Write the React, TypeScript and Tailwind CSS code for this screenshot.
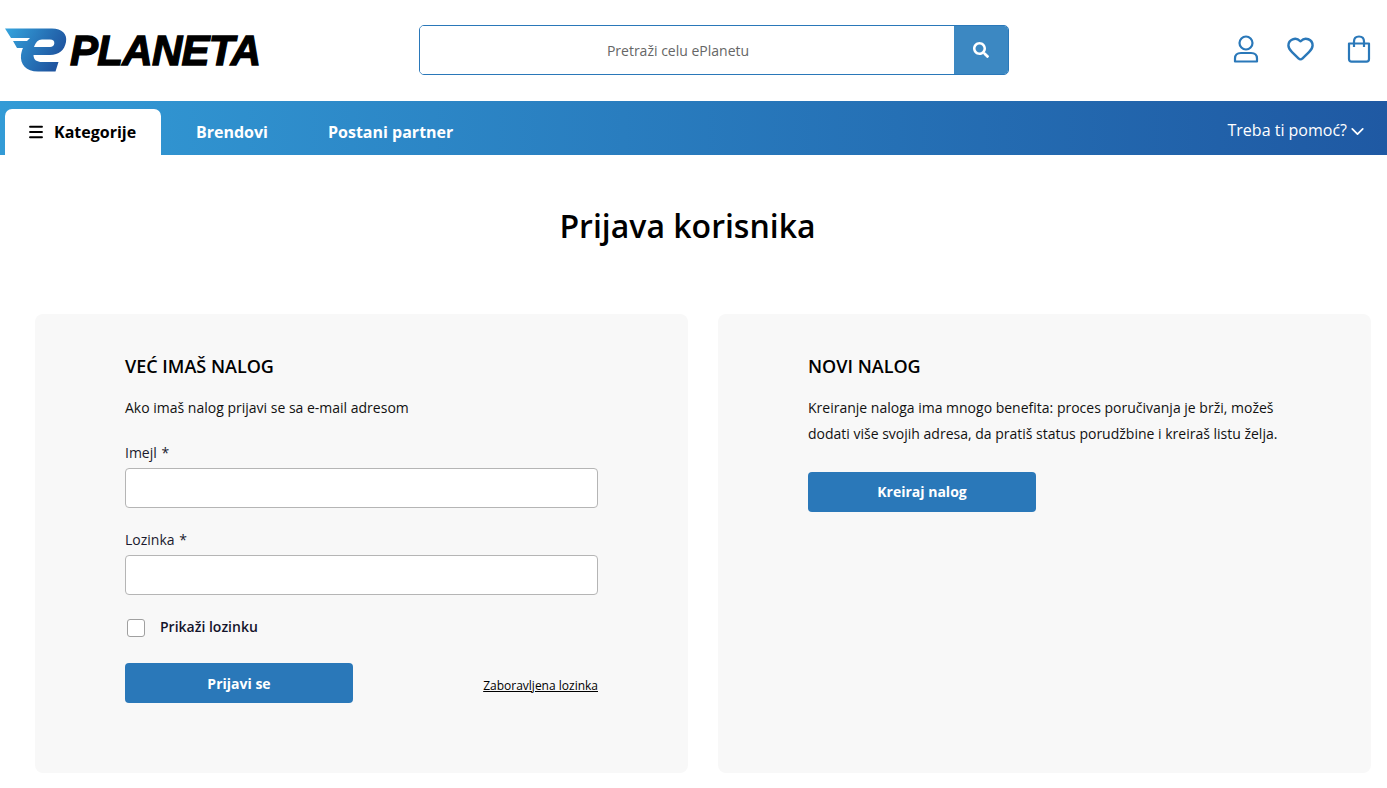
import React from 'react';
import { ChevronDown, Heart, Menu } from 'lucide-react';
import { FaSearch } from 'react-icons/fa';

const Logo = () => (
  <div className="flex items-center w-[419px] h-[50px] shrink-0">
    <svg width="70" height="50" viewBox="0 25 70 50" className="shrink-0">
      <defs>
        <linearGradient id="logoBlue" x1="0" y1="0" x2="1" y2="0.4">
          <stop offset="0" stopColor="#35a5de" />
          <stop offset="1" stopColor="#1f55a0" />
        </linearGradient>
      </defs>
      <path
        d="M5 28.500H52C62 28.500 67.500 34 66 42C64.500 50 59 55 50 55H33.500C33.500 60 37 62 42 62H58.500L55.500 71.500H38C26 71.500 20 64 21 55C21.500 52 22 50 23 48H17L13 41H27C28 40 29 39 30 38H11Z"
        fill="url(#logoBlue)"
      />
      <path d="M34 47H50C52.500 47 54 45.500 54.300 43.500C54.600 41 53 39.500 50 39.500H42C38 39.500 35.500 42.500 34 47Z" fill="#fff" />
    </svg>
    <span className="mt-[2px] font-['Liberation_Sans',sans-serif] text-[42px] leading-none font-bold italic text-black tracking-[-0.7px] [-webkit-text-stroke:1.3px_#000]">
      PLANETA
    </span>
  </div>
);

const SearchBar = () => (
  <div className="flex w-[590px] h-[50px] rounded-[5px] border border-[#2a78b9] overflow-hidden">
    <div className="flex-1 flex items-center justify-center pr-[18px] pt-[2px] text-sm text-[#666] bg-white">Pretraži celu ePlanetu</div>
    <div className="w-[54px] bg-[#3c88c2] flex items-center justify-center">
      <FaSearch size={16} className="text-white" />
    </div>
  </div>
);

const HeaderIcons = () => (
  <div className="ml-auto mb-[2px] flex items-center text-[#2a78b9] pr-[16px]">
    <svg width="26" height="28" viewBox="0 0 26 28" fill="none" stroke="currentColor" strokeWidth="2.200" className="-mr-[1px] -translate-x-[1px]">
      <circle cx="13" cy="8" r="6.500" />
      <path d="M2 26.500V23.500C2 20 4.500 18 8 18H18C21.500 18 24 20 24 23.500V26.500Z" strokeLinejoin="round" />
    </svg>
    <Heart size={29} strokeWidth={2} className="ml-[27px]" />
    <svg width="24" height="28" viewBox="0 0 24 28" fill="none" stroke="currentColor" strokeWidth="2.200" className="ml-[32px]">
      <path d="M2 8.500H22V24C22 25.700 21 26.700 19.500 26.700H4.500C3 26.700 2 25.700 2 24Z" strokeLinejoin="round" />
      <path d="M7 12V6.500C7 3.500 9 1.500 12 1.500C15 1.500 17 3.500 17 6.500V12" />
    </svg>
  </div>
);

const Field = ({ label }: { label: string }) => (
  <div>
    <label className="block text-sm leading-[19px] text-[#1a1a2e]">
      {label} <span className="ml-[1px]">*</span>
    </label>
    <div className="mt-[6px] h-10 rounded-[4px] border border-[#b5b5b5] bg-white" />
  </div>
);

export default function App() {
  return (
    <div className="min-h-[788px] bg-white font-['Open_Sans',sans-serif] text-black overflow-hidden">
      {/* Header */}
      <header className="h-[101px] flex items-center pb-[2px]">
        <Logo />
        <SearchBar />
        <HeaderIcons />
      </header>

      {/* Nav */}
      <nav className="h-[54px] flex items-end pl-[5px] pr-[19px] bg-gradient-to-r from-[#339bd6] to-[#1f59a3]">
        <div className="w-[156px] h-[46px] pl-[22px] bg-white rounded-t-[7px] flex items-center gap-[9px] text-base font-bold text-black">
          <Menu size={18} strokeWidth={2.500} />
          Kategorije
        </div>
        <div className="h-[46px] ml-[35px] flex items-center text-base font-bold text-white">Brendovi</div>
        <div className="h-[46px] ml-[60px] flex items-center text-base font-bold text-white">Postani partner</div>
        <div className="ml-auto self-center pt-[4px] flex items-center text-base text-white">
          Treba ti pomoć?
          <ChevronDown size={21} strokeWidth={2} className="mt-[3px]" />
        </div>
      </nav>

      {/* Title */}
      <h1 className="mt-[47px] pr-[12px] text-center text-[32px] leading-[48px] font-semibold text-black">Prijava korisnika</h1>

      {/* Cards */}
      <main className="mt-[64px] pr-[16px] pl-[35px] grid grid-cols-2 gap-[30px]">
        <section className="h-[459px] rounded-[8px] bg-[#f8f8f8] px-[90px] pt-[39px]">
          <h2 className="text-lg leading-[27px] font-semibold">VEĆ IMAŠ NALOG</h2>
          <p className="mt-[15px] text-sm leading-[26px] text-[#111]">Ako imaš nalog prijavi se sa e-mail adresom</p>
          <div className="mt-[22px] flex flex-col gap-[22px]">
            <Field label="Imejl" />
            <Field label="Lozinka" />
          </div>
          <div className="mt-[23px] flex items-center pl-[2px]">
            <div className="w-[18px] h-[18px] rounded-[3px] border border-[#a0a0a0] bg-white" />
            <span className="ml-[15px] -mt-[1px] text-sm font-semibold text-[#14142b]">Prikaži lozinku</span>
          </div>
          <div className="mt-[26px] flex items-center justify-between">
            <button className="w-[228px] h-10 pt-[1px] rounded-[4px] bg-[#2a78b9] text-sm font-bold text-white">Prijavi se</button>
            <a className="mt-[5px] text-xs underline text-black">Zaboravljena lozinka</a>
          </div>
        </section>

        <section className="h-[459px] rounded-[8px] bg-[#f8f8f8] px-[90px] pt-[39px]">
          <h2 className="text-lg leading-[27px] font-semibold">NOVI NALOG</h2>
          <p className="mt-[15px] text-sm leading-[26px] text-[#111]">
            Kreiranje naloga ima mnogo benefita: proces poručivanja je brži, možeš dodati više svojih adresa, da pratiš status porudžbine i kreiraš listu želja.
          </p>
          <button className="mt-[25px] w-[228px] h-10 rounded-[4px] bg-[#2a78b9] text-sm font-bold text-white">Kreiraj nalog</button>
        </section>
      </main>
    </div>
  );
}
